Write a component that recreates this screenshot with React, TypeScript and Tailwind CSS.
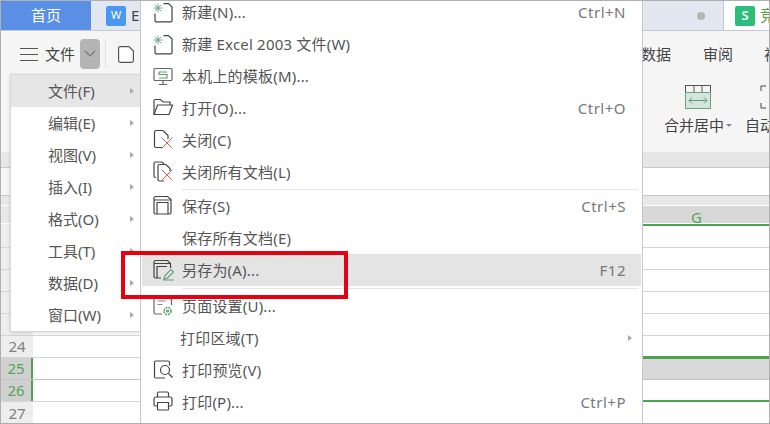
import type { ReactNode } from 'react'

const stroke = '#444'

function Svg({ children, shift = true }: { children: ReactNode; shift?: boolean }) {
  return (
    <svg width="24" height="24" viewBox="0 0 24 24" fill="none" stroke={stroke} strokeWidth="1.2" className="overflow-visible">
      <g transform={shift ? 'translate(2 -1)' : undefined}>{children}</g>
    </svg>
  )
}

const Spark = () => (
  <g stroke="#6aa583" strokeWidth="1" transform="translate(4 3)">
    <path d="M5 0.5v9M0.5 5h9M1.800 1.800l6.400 6.400M8.200 1.800l-6.400 6.400" />
  </g>
)

const NewIcon = () => (
  <Svg shift={false}>
    <path d="M14.500 3.600h5l3.500 3.500v13.300a1.500 1.500 0 0 1-1.500 1.500H7.500A1.500 1.500 0 0 1 6 20.400V13.500" />
    <Spark />
  </Svg>
)

const TemplateIcon = () => (
  <Svg>
    <rect x="3" y="5.500" width="18" height="12" rx="1" stroke="#666" />
    <path d="M8 9h8M8 9v2.500h8V15H8" stroke="#5f9e77" />
    <path d="M12 18v3M8 21.500h8" stroke="#666" />
  </Svg>
)

const OpenIcon = () => (
  <Svg>
    <path d="M3 19V6a1.500 1.500 0 0 1 1.500-1.500h5L12 7h7v3" />
    <path d="M3 19.500h15l3.500-9.500H6.500L3 19.500z" />
  </Svg>
)

const X = () => <path d="M12.500 9.500l11 11M23.500 9.500l-11 11" stroke="#e0605a" strokeWidth="1" />

const CloseIcon = () => (
  <Svg shift={false}>
    <path d="M14 19.500H7A1.500 1.500 0 0 1 5.500 18V4A1.500 1.500 0 0 1 7 2.500h7l5 5V11" />
    <X />
  </Svg>
)

const CloseAllIcon = () => (
  <Svg shift={false}>
    <path d="M7 17.500H6.500A1.500 1.500 0 0 1 5 16V3.500A1.500 1.500 0 0 1 6.500 2H13l2 2" />
    <path d="M15 21H10.500A1.500 1.500 0 0 1 9 19.500V6a1.500 1.500 0 0 1 1.500-1.500H17l4 4V11" />
    <X />
  </Svg>
)

const SaveIcon = () => (
  <Svg>
    <path d="M4.500 3.500h12l3.500 3v13a1.500 1.500 0 0 1-1.500 1.500H4.500A1.500 1.500 0 0 1 3 19.500V5a1.500 1.500 0 0 1 1.500-1.500z" />
    <path d="M6 21V9.500h11V21M3 7h17" />
  </Svg>
)

const SaveAsIcon = () => (
  <Svg>
    <path d="M10 21H4.500A1.500 1.500 0 0 1 3 19.500V5a1.500 1.500 0 0 1 1.500-1.500h12l3 3V11" />
    <path d="M6 21V9.500h10M3 6.500h16" />
    <path d="M13 22l1-3.500 6-6 2.500 2.500-6 6-3.500 1zM12 23h11" stroke="#5f9e77" />
  </Svg>
)

const PageIcon = () => (
  <Svg>
    <path d="M11 21H4.500A1.500 1.500 0 0 1 3 19.500V5a1.500 1.500 0 0 1 1.500-1.500h13l3 3V12" stroke="#666" />
    <path d="M6.500 8h8M6.500 11.500h5" stroke="#888" />
    <circle cx="16.500" cy="18" r="3.500" stroke="#5f9e77" strokeDasharray="2 0.8" strokeWidth="1.600" />
    <circle cx="16.500" cy="18" r="1" stroke="#5f9e77" />
  </Svg>
)

const PreviewIcon = () => (
  <Svg>
    <path d="M14 21H5a1.500 1.500 0 0 1-1.500-1.500v-14A1.500 1.500 0 0 1 5 4h12a1.500 1.500 0 0 1 1.500 1.500v3" />
    <circle cx="14" cy="13" r="4.500" />
    <path d="M17.500 16.500l4 4" />
  </Svg>
)

const PrintIcon = () => (
  <Svg>
    <path d="M6.500 8V4.500A1.500 1.500 0 0 1 8 3h8a1.500 1.500 0 0 1 1.500 1.500V8" />
    <path d="M6 17H4.500A1.500 1.500 0 0 1 3 15.500V10a2 2 0 0 1 2-2h14a2 2 0 0 1 2 2v5.500a1.500 1.500 0 0 1-1.500 1.500H18" />
    <path d="M6.500 13.500h11v7a.5.500 0 0 1-.5.5H7a.5.500 0 0 1-.5-.5z" />
  </Svg>
)

const Arrow = () => (
  <span className="h-0 w-0 border-y-[3.5px] border-l-[4px] border-y-transparent border-l-[#a8a8a8]" />
)

const leftItems = ['文件(F)', '编辑(E)', '视图(V)', '插入(I)', '格式(O)', '工具(T)', '数据(D)', '窗口(W)']

type MenuRow = { icon?: ReactNode; label: string; key?: string; arrow?: boolean; active?: boolean; sep?: string }

const mainItems: MenuRow[] = [
  { icon: <NewIcon />, label: '新建(N)...', key: 'Ctrl+N' },
  { icon: <NewIcon />, label: '新建 Excel 2003 文件(W)' },
  { icon: <TemplateIcon />, label: '本机上的模板(M)...' },
  { icon: <OpenIcon />, label: '打开(O)...', key: 'Ctrl+O' },
  { icon: <CloseIcon />, label: '关闭(C)' },
  { icon: <CloseAllIcon />, label: '关闭所有文档(L)', sep: 'h-[2px]' },
  { icon: <SaveIcon />, label: '保存(S)', key: 'Ctrl+S' },
  { icon: <span />, label: '保存所有文档(E)' },
  { icon: <SaveAsIcon />, label: '另存为(A)...', key: 'F12', active: true, sep: 'h-[3px] mb-px' },
  { icon: <PageIcon />, label: '页面设置(U)...' },
  { label: '打印区域(T)', arrow: true },
  { icon: <PreviewIcon />, label: '打印预览(V)' },
  { icon: <PrintIcon />, label: '打印(P)...', key: 'Ctrl+P' },
]

type SheetRow = { h: string; num?: string; head: string; left: string; right: string; line: string; green?: boolean; label?: string }

const sheetRows: SheetRow[] = [
  { h: 'h-[16px]', head: 'bg-[#e8e8e8]', left: 'bg-[#e8e8e8]', right: 'bg-[#e6e6e6]', line: 'border-[#c8c8c8]' },
  { h: 'h-[28px]', head: 'bg-[#f5f5f5]', left: 'bg-white', right: 'bg-white', line: 'border-[#c8c8c8]' },
  { h: 'h-[10px]', head: 'bg-[#e8e8e8]', left: 'bg-[#e8e8e8]', right: 'bg-[#e8e8e8]', line: 'border-transparent' },
  { h: 'h-[18px]', head: 'bg-[#e8e8e8]', left: 'bg-[#e8e8e8]', right: 'bg-[#d8d8d8]', line: 'border-transparent', label: 'G' },
  { h: 'h-[24px]', head: 'bg-[#eeeeee]', left: 'bg-white', right: 'bg-white border-t-2 border-t-[#4ea24f]', line: 'border-[#d4d4d4]' },
  { h: 'h-[22px]', head: 'bg-[#eeeeee]', left: 'bg-white', right: 'bg-white', line: 'border-[#d4d4d4]' },
  { h: 'h-[22px]', head: 'bg-[#eeeeee]', left: 'bg-white', right: 'bg-white', line: 'border-[#d4d4d4]' },
  { h: 'h-[22px]', head: 'bg-[#eeeeee]', left: 'bg-white', right: 'bg-white', line: 'border-[#d4d4d4]' },
  { h: 'h-[22px]', head: 'bg-[#eeeeee]', left: 'bg-white', right: 'bg-white', line: 'border-[#d4d4d4]' },
  { h: 'h-[22px]', num: '24', head: 'bg-[#eeeeee]', left: 'bg-white', right: 'bg-white border-b-2 border-b-[#4ea24f] -mb-px', line: 'border-[#d4d4d4]' },
  { h: 'h-[22px]', num: '25', green: true, head: 'bg-[#d0d0d0]', left: 'bg-white', right: 'bg-[#d9d9d9] border-t border-t-[#4ea24f]', line: 'border-[#c4c4c4]' },
  { h: 'h-[22px]', num: '26', green: true, head: 'bg-[#d0d0d0]', left: 'bg-white', right: 'bg-white border-b-2 border-b-[#4ea24f] -mb-px', line: 'border-[#d4d4d4]' },
  { h: 'h-[24px]', num: '27', head: 'bg-[#eeeeee]', left: 'bg-white', right: 'bg-white', line: 'border-transparent' },
]

export default function App() {
  return (
    <div
      className="relative flex h-[424px] w-[770px] flex-col overflow-hidden border border-[#b0b0b0] bg-white text-[15px] text-[#555]"
      style={{ fontFamily: '"Noto Sans", "Noto Sans CJK SC", sans-serif' }}
    >
      {/* Tabs */}
      <div className="flex h-[30px] shrink-0 border-b border-[#c4c8d4] bg-[#e3e7f1]">
        <div className="flex w-[90px] shrink-0 items-center justify-center bg-[#5a8fe6] text-white">首页</div>
        <div className="flex w-[633px] shrink-0 items-center border-r border-[#c4c8d4] pl-[15px]">
          <span className="flex h-[20px] w-[20px] items-center justify-center rounded-[2px] bg-[#4a97f0] text-[11px] text-white">W</span>
          <span className="ml-[5px] text-[#444]">E</span>
          <span className="ml-auto mr-[18px] h-[8px] w-[8px] rounded-full bg-[#b4b4b4]" />
        </div>
        <div className="flex min-w-0 flex-1 items-center overflow-hidden bg-white pl-[11px]">
          <span className="flex h-[20px] w-[20px] shrink-0 items-center justify-center rounded-[2px] bg-[#2cbd7a] text-[13px] font-semibold text-white">S</span>
          <span className="ml-[5px] shrink-0 text-[#5a9a4a]">竞</span>
        </div>
      </div>

      {/* Toolbar */}
      <div className="relative flex h-[121px] shrink-0 overflow-hidden bg-[#f5f5f5]">
        <div className="flex h-[46px] w-full items-center">
          <span className="ml-[19px] flex h-[13px] w-[18px] shrink-0 flex-col justify-between">
            <i className="block h-px bg-[#555]" />
            <i className="block h-px bg-[#555]" />
            <i className="block h-px bg-[#555]" />
          </span>
          <span className="ml-[7px] shrink-0 whitespace-nowrap text-[#444]">文件</span>
          <span className="ml-[5px] flex h-[30px] w-[20px] shrink-0 items-center justify-center rounded-[4px] bg-[#b4b4b4]">
            <svg width="12" height="8" viewBox="0 0 12 8" fill="none" stroke="#777" strokeWidth="1.200">
              <path d="M1 1l5 5 5-5" />
            </svg>
          </span>
          <span className="ml-[5px] h-[28px] w-px shrink-0 bg-[#e0e0e0]" />
          <svg width="16" height="17" viewBox="0 0 16 17" fill="none" stroke="#555" strokeWidth="1.200" className="ml-[12px] shrink-0">
            <path d="M2 .6h9l4.400 4.400v9.500a1.800 1.800 0 0 1-1.800 1.800H2.400A1.800 1.800 0 0 1 .6 14.500V2A1.400 1.400 0 0 1 2 .6z" fill="#fff" />
          </svg>
          <span className="ml-[507px] shrink-0 whitespace-nowrap text-[#444]">数据</span>
          <span className="ml-[32px] shrink-0 whitespace-nowrap text-[#444]">审阅</span>
          <span className="ml-[31px] shrink-0 text-[#444]">视</span>
        </div>
        <div className="absolute left-[662px] top-[54px] flex w-[70px] flex-col items-center">
          <svg width="28" height="25" viewBox="0 0 28 25" fill="none" strokeWidth="1">
            <rect x="1.500" y="0.500" width="25" height="7" stroke="#555" />
            <path d="M10 .5v7M18 .5v7" stroke="#555" />
            <rect x="1.500" y="7.500" width="25" height="16" fill="#d4e6dc" stroke="#6ba283" />
            <path d="M5 15.500h18M8 12.500l-3 3 3 3M20 12.500l3 3-3 3" stroke="#5e9b7a" />
          </svg>
          <span className="mt-[5px] flex items-center leading-[20px] whitespace-nowrap text-[#444]">
            合并居中
            <span className="ml-[2px] h-0 w-0 border-x-[3px] border-t-[3px] border-x-transparent border-t-[#888]" />
          </span>
        </div>
        <div className="absolute left-[744px] top-[54px] flex flex-col">
          <svg width="10" height="25" viewBox="0 0 10 25" fill="none" stroke="#444" strokeWidth="1" className="ml-[15px]">
            <path d="M6 1H1v5M1 18v5h5" />
          </svg>
          <span className="mt-[5px] leading-[20px] whitespace-nowrap text-[#444]">自动</span>
        </div>
      </div>

      {/* Sheet */}
      <div className="flex flex-1 flex-col overflow-hidden">
        {sheetRows.map((row, i) => (
          <div key={i} className={`flex shrink-0 border-b ${row.h} ${row.line}`}>
            <div
              className={`flex w-[32px] shrink-0 items-center justify-center ${row.head} ${
                row.green ? 'border-r-2 border-[#4ea24f] text-[#55a45a]' : 'text-[#808080]'
              }`}
            >
              {row.num}
            </div>
            <div className={`flex-1 ${row.left}`} />
            <div className={`flex w-[127px] shrink-0 justify-center pr-[18px] leading-[22px] text-[#55a45a] ${row.right}`}>
              {row.label}
            </div>
          </div>
        ))}
      </div>

      {/* Left menu */}
      <div className="absolute left-[9px] top-[73px] w-[131px] border border-[#d8d8d8] bg-white shadow-[0_1px_3px_rgba(0,0,0,0.15)]">
        {leftItems.map((label, i) => (
          <div key={label} className={`flex h-[32px] items-center pl-[37px] pr-[6px] ${i === 0 ? 'bg-[#e6e6e6]' : ''}`}>
            <span className="flex-1">{label}</span>
            <Arrow />
          </div>
        ))}
      </div>

      {/* File menu */}
      <div className="absolute -top-[5px] left-[139px] h-[430px] w-[503px] border-x border-[#c8c8c8] bg-white px-px tracking-[0.2px]">
        {mainItems.map((item) => (
          <div key={item.label}>
            <div className={`flex h-[32px] items-center ${item.active ? 'bg-[#e4e4e4]' : ''}`}>
              <span className="ml-[7px] flex w-[24px] justify-center">{item.icon}</span>
              <span className={`flex-1 whitespace-nowrap ${item.icon ? 'ml-[9px]' : 'ml-[7px]'}`}>{item.label}</span>
              {item.key && <span className="mr-[15px] tracking-[0.5px] text-[#777]">{item.key}</span>}
              {item.arrow && (
                <span className="mr-[9px] flex">
                  <Arrow />
                </span>
              )}
            </div>
            {item.sep && <div className={`ml-[40px] mr-[3px] border-b border-[#e4e4e4] ${item.sep}`} />}
          </div>
        ))}
      </div>

      {/* Red callout */}
      <div className="absolute left-[120px] top-[250px] h-[48px] w-[227px] border-[4px] border-[#e60012]" />
    </div>
  )
}
